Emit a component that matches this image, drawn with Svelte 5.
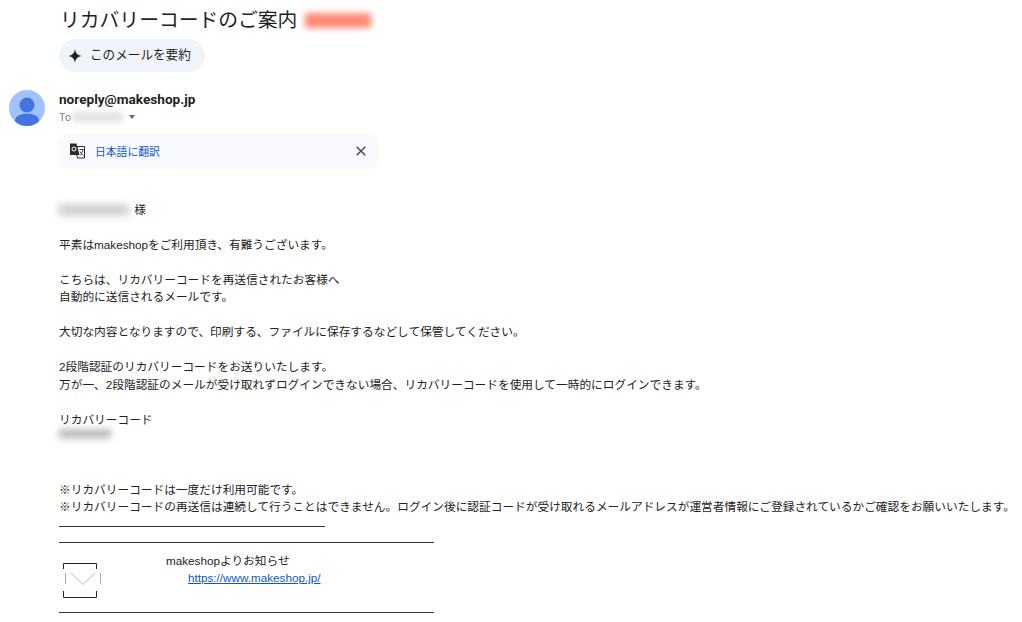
<script>
	const paragraphs = [
		['平素はmakeshopをご利用頂き、有難うございます。'],
		['こちらは、リカバリーコードを再送信されたお客様へ', '自動的に送信されるメールです。'],
		['大切な内容となりますので、印刷する、ファイルに保存するなどして保管してください。'],
		['2段階認証のリカバリーコードをお送りいたします。', '万が一、2段階認証のメールが受け取れずログインできない場合、リカバリーコードを使用して一時的にログインできます。']
	]
</script>

<div class='mail'>
	<h1 class='subject'>リカバリーコードのご案内 <span class='tag'></span></h1>

	<div class='indent'>
		<button class='summary'>
			<svg width='14' height='14' viewBox='0 0 14 14'><path d='M7 0C7.5 4.2 9.5 6.4 14 7C9.5 7.6 7.5 9.8 7 14C6.5 9.8 4.5 7.6 0 7C4.5 6.4 6.5 4.2 7 0Z' fill='#1f1f1f' /></svg>
			<span>このメールを要約</span>
		</button>
	</div>

	<div class='sender'>
		<svg class='avatar' width='36' height='36' viewBox='0 0 36 36'>
			<defs><clipPath id='round'><circle cx='18' cy='18' r='18' /></clipPath></defs>
			<circle cx='18' cy='18' r='18' fill='#a0c3ff' />
			<g clip-path='url(#round)' fill='#4375e0'>
				<circle cx='18' cy='15' r='7.5' />
				<ellipse cx='18' cy='30.5' rx='12' ry='7' />
			</g>
		</svg>
		<div class='who'>
			<div class='from'>noreply@makeshop.jp</div>
			<div class='to'>To <span class='smudge to-name'></span><span class='caret'></span></div>
		</div>
	</div>

	<div class='indent'>
		<div class='translate'>
			<svg width='17' height='16' viewBox='0 0 17 16'>
				<path d='M6 3.5H15.5V15H8.5Z' fill='#fff' stroke='#2a2a2a' stroke-width='1' />
				<path d='M1 .5H7.5L10.5 12H1Z' fill='#2a2a2a' />
				<circle cx='5' cy='6' r='2' fill='none' stroke='#fff' stroke-width='1' />
				<path d='M10.5 6.5H14.5M14 6.5C13.5 9 12.5 11 11 12.5M11 8.5C11.8 10.3 13 11.6 14.5 12.5' fill='none' stroke='#2a2a2a' stroke-width='.9' />
			</svg>
			<span class='label'>日本語に翻訳</span>
			<svg class='close' width='10' height='10' viewBox='0 0 10 10'><path d='M.7 .7L9.3 9.3M9.3 .7L.7 9.3' stroke='#444746' stroke-width='1.4' /></svg>
		</div>

		<div class='body'>
			<p><span class='smudge name'></span> 様</p>
			{#each paragraphs as lines}
				<p>
					{#each lines as line}
						{line}<br>
					{/each}
				</p>
			{/each}
			<p class='code-block'>リカバリーコード<br><span class='smudge code'></span></p>
			<div class='notes'>
				※リカバリーコードは一度だけ利用可能です。<br>
				<span class='nowrap'>※リカバリーコードの再送信は連続して行うことはできません。ログイン後に認証コードが受け取れるメールアドレスが運営者情報にご登録されているかご確認をお願いいたします。</span>
			</div>
			<div class='rule short'></div>
			<div class='rule long'></div>

			<div class='signature'>
				<svg width='44' height='38' viewBox='0 0 44 38'>
					<path d='M4.5 8V2.5H37.5V8M4.5 30V36.5H37.5V30' fill='none' stroke='#222' stroke-width='1' />
					<path d='M6.5 12V23M41.5 12V23' stroke='#a5a8c8' stroke-width='1' />
					<path d='M12 12L24 23.5L36 12' fill='none' stroke='#9cc3da' stroke-width='1' />
				</svg>
				<div class='notice'>
					<div>makeshopよりお知らせ</div>
					<a href='https://www.makeshop.jp/'>https://www.makeshop.jp/</a>
				</div>
			</div>
			<div class='rule long'></div>
		</div>
	</div>
</div>

<style>
	:global(body) {
		background: #fff;
	}

	.mail {
		width: 1022px;
		height: 622px;
		overflow: hidden;
		font-family: 'Liberation Sans', 'Noto Sans CJK JP', sans-serif;
		color: #222;
	}

	.subject {
		margin: 0;
		padding: 5px 0 0 60px;
		height: 33px;
		box-sizing: border-box;
		font-family: 'Noto Sans CJK JP', sans-serif;
		font-size: 19.8px;
		line-height: 27px;
		font-weight: 400;
		color: #1f1f1f;
		white-space: nowrap;
	}

	.tag {
		display: inline-block;
		width: 66px;
		height: 15px;
		margin-left: 3px;
		vertical-align: -1px;
		background: #ff8a75;
		filter: blur(3px);
	}

	.indent {
		padding-left: 59px;
	}

	.summary {
		display: flex;
		align-items: center;
		gap: 8px;
		width: 146px;
		height: 33px;
		margin: 6px 0 0;
		padding: 0 0 0 9px;
		border: 0;
		border-radius: 17px;
		background: #f0f4f9;
		font-family: 'Noto Sans CJK JP', sans-serif;
		font-size: 12.6px;
		color: #1f1f1f;
	}

	.summary span {
		padding-bottom: 4px;
	}

	.sender {
		display: flex;
		gap: 14px;
		margin: 18px 0 0 9px;
		height: 43px;
	}

	.who {
		padding-top: 1px;
	}

	.from {
		font-family: Roboto, sans-serif;
		font-size: 13.6px;
		line-height: 17px;
		font-weight: 700;
		color: #1f1f1f;
	}

	.to {
		display: flex;
		align-items: center;
		height: 18px;
		font-family: Roboto, sans-serif;
		font-size: 10.8px;
		color: #7a7f85;
	}

	.smudge {
		display: inline-block;
		filter: blur(3px);
		background: #b0b0b0;
	}

	.to-name {
		width: 50px;
		height: 10px;
		margin-left: 2px;
		background: #e2e2e2;
	}

	.caret {
		margin-left: 6px;
		border: 3.5px solid transparent;
		border-top: 4px solid #5f6368;
		border-bottom: 0;
	}

	.translate {
		display: flex;
		align-items: center;
		width: 320px;
		height: 36px;
		box-sizing: border-box;
		padding: 0 12px 0 10px;
		border-radius: 9px;
		background: #f8fafd;
	}

	.label {
		margin-left: 9px;
		font-family: 'Noto Sans CJK JP', sans-serif;
		font-size: 10.8px;
		color: #0b57d0;
	}

	.close {
		margin-left: auto;
		margin-right: 1px;
	}

	.body {
		width: 963px;
		margin-top: 31.5px;
		font-size: 11.7px;
		line-height: 17.5px;
		color: #222;
	}

	p {
		margin: 0 0 17.5px;
	}

	.name {
		width: 70px;
		height: 10px;
		margin-right: 2px;
		vertical-align: -1px;
		background: #c6c6c6;
		filter: blur(4px);
	}

	.code-block {
		margin-bottom: 35px;
	}

	.code {
		width: 52px;
		height: 9px;
		vertical-align: 2px;
		background: linear-gradient(#999, #d8d8d8);
		filter: blur(3.5px);
	}

	.nowrap {
		white-space: nowrap;
	}

	.rule {
		box-sizing: border-box;
		border-bottom: 1px solid #333;
	}

	.short {
		width: 266px;
		height: 11.5px;
	}

	.long {
		width: 375px;
		height: 15.5px;
	}

	.signature {
		display: grid;
		grid-template-columns: 107px auto;
		box-sizing: border-box;
		height: 54.5px;
		padding-top: 9px;
	}

	.signature svg {
		margin-top: 9px;
	}

	a {
		display: block;
		margin-left: 22px;
		color: #1155cc;
	}
</style>
